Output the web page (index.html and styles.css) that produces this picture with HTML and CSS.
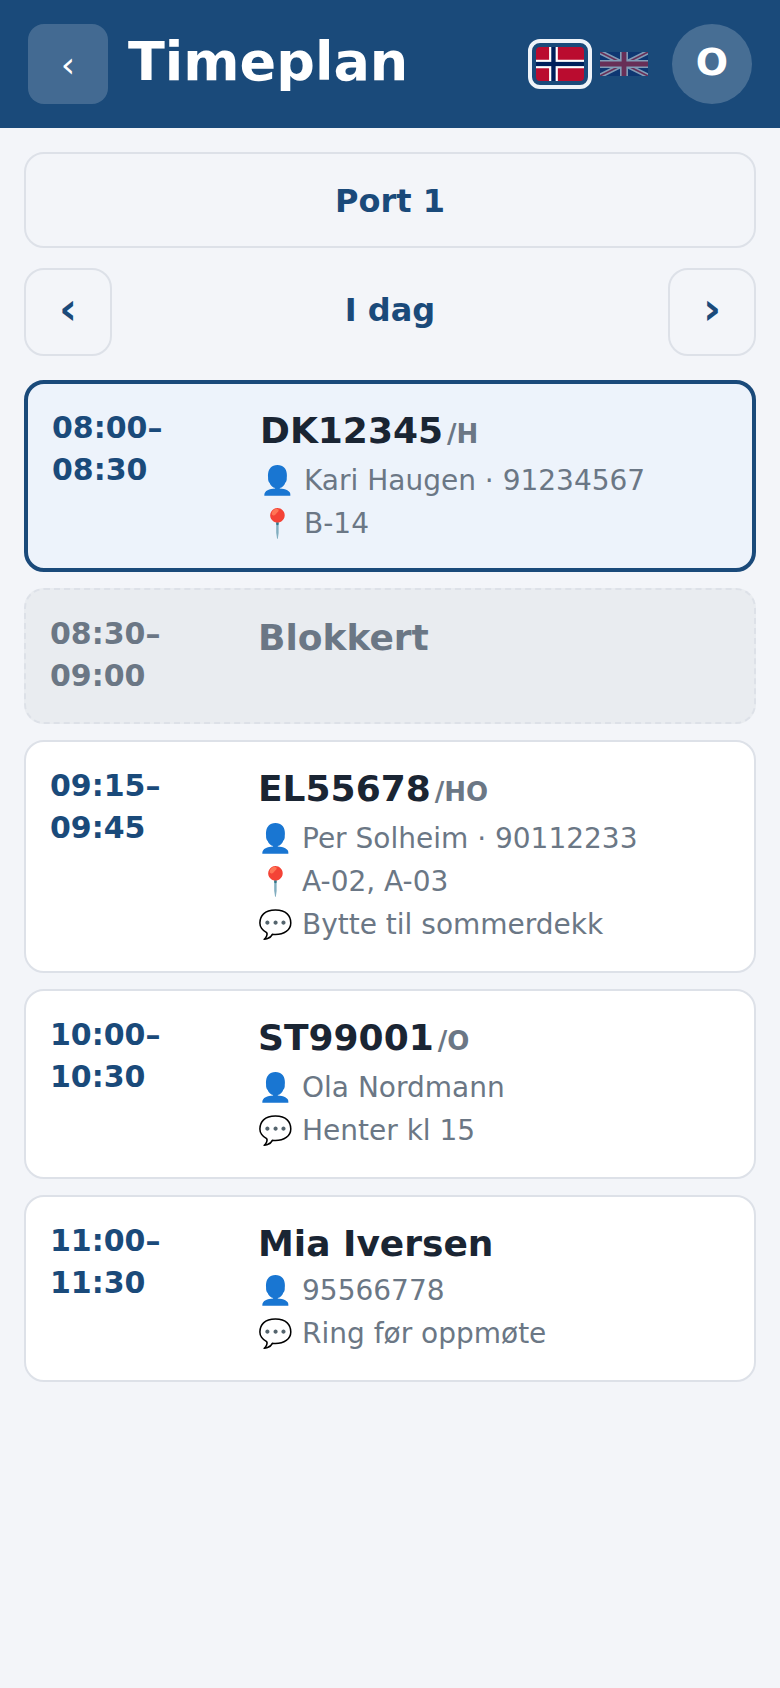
FILE: index.html
```html
<!DOCTYPE html>
<html lang="no">
  <head>
    <meta charset="UTF-8" />
    <meta name="viewport" content="width=device-width, initial-scale=1.0" />
    <title>Timeplan</title>
    <link rel="stylesheet" href="styles.css">
  </head>

  <body>
    <header class="topbar">
      <button class="back-btn">‹</button>
      <h1 class="title">Timeplan</h1>
      <div class="langs">
        <button class="lang lang-active">
          <svg class="flag" viewBox="0 0 22 16" preserveAspectRatio="none">
            <rect width="22" height="16" fill="#ba0c2f" />
            <rect x="6" width="4" height="16" fill="#fff" />
            <rect y="6" width="22" height="4" fill="#fff" />
            <rect x="7" width="2" height="16" fill="#00205b" />
            <rect y="7" width="22" height="2" fill="#00205b" />
          </svg>
        </button>
        <button class="lang lang-off">
          <svg class="flag" viewBox="0 0 60 30" preserveAspectRatio="none">
            <rect width="60" height="30" fill="#012169" />
            <path d="M0 0L60 30M60 0L0 30" stroke="#fff" stroke-width="6" />
            <path d="M0 0L60 30M60 0L0 30" stroke="#c8102e" stroke-width="2" />
            <path d="M30 0V30M0 15H60" stroke="#fff" stroke-width="10" />
            <path d="M30 0V30M0 15H60" stroke="#c8102e" stroke-width="6" />
          </svg>
        </button>
      </div>
      <div class="avatar">O</div>
    </header>

    <main class="content">
      <div class="port">Port 1</div>

      <div class="day-nav">
        <button class="nav-btn">‹</button>
        <div class="day">I dag</div>
        <button class="nav-btn">›</button>
      </div>

      <div class="slots">
        <div class="slot slot-selected">
          <div class="time">08:00–<br />08:30</div>
          <div class="info">
            <div class="name">DK12345<span class="code">/H</span></div>
            <div class="line"><span class="ico">👤</span>Kari Haugen · 91234567</div>
            <div class="line"><span class="ico">📍</span>B-14</div>
          </div>
        </div>

        <div class="slot slot-blocked">
          <div class="time">08:30–<br />09:00</div>
          <div class="info">
            <div class="name">Blokkert</div>
          </div>
        </div>

        <div class="slot">
          <div class="time">09:15–<br />09:45</div>
          <div class="info">
            <div class="name">EL55678<span class="code">/HO</span></div>
            <div class="line"><span class="ico">👤</span>Per Solheim · 90112233</div>
            <div class="line"><span class="ico">📍</span>A-02, A-03</div>
            <div class="line"><span class="ico">💬</span>Bytte til sommerdekk</div>
          </div>
        </div>

        <div class="slot">
          <div class="time">10:00–<br />10:30</div>
          <div class="info">
            <div class="name">ST99001<span class="code">/O</span></div>
            <div class="line"><span class="ico">👤</span>Ola Nordmann</div>
            <div class="line"><span class="ico">💬</span>Henter kl 15</div>
          </div>
        </div>

        <div class="slot">
          <div class="time">11:00–<br />11:30</div>
          <div class="info">
            <div class="name">Mia Iversen</div>
            <div class="line"><span class="ico">👤</span>95566778</div>
            <div class="line"><span class="ico">💬</span>Ring før oppmøte</div>
          </div>
        </div>
      </div>
    </main>
  </body>
</html>
```

FILE: styles.css
```css
body {
  margin: 0;
  background-color: #f3f5f9;
  font-family: "DejaVu Sans", sans-serif;
  color: #1a2533;
}

button {
  font-family: inherit;
  padding: 0;
}

.topbar {
  display: flex;
  align-items: center;
  height: 128px;
  padding: 0 28px;
  box-sizing: border-box;
  background-color: #1a4a7a;
  color: white;
}

.back-btn {
  width: 80px;
  height: 80px;
  border: none;
  border-radius: 16px;
  background-color: rgba(255, 255, 255, 0.18);
  color: white;
  font-size: 36px;
}

.title {
  flex: 1;
  margin: 0 0 6px 20px;
  font-size: 54px;
  font-weight: bold;
}

.langs {
  display: flex;
  align-items: center;
  gap: 8px;
  margin-right: 24px;
}

.lang {
  display: flex;
  align-items: center;
  justify-content: center;
  border: none;
  background: none;
}

.lang-active {
  width: 64px;
  height: 50px;
  box-sizing: border-box;
  border: 4px solid #eef3f9;
  border-radius: 12px;
}

.lang-active .flag {
  width: 48px;
  height: 34px;
  border-radius: 4px;
}

.lang-off {
  width: 48px;
  height: 24px;
  opacity: 0.45;
}

.lang-off .flag {
  width: 48px;
  height: 24px;
}

.flag {
  display: block;
}

.avatar {
  display: flex;
  align-items: center;
  justify-content: center;
  width: 80px;
  height: 80px;
  padding-bottom: 4px;
  box-sizing: border-box;
  border-radius: 50%;
  background-color: rgba(255, 255, 255, 0.2);
  font-size: 38px;
  font-weight: bold;
}

.content {
  display: flex;
  flex-direction: column;
  padding: 24px;
}

.port {
  display: flex;
  align-items: center;
  justify-content: center;
  height: 96px;
  padding-top: 2px;
  box-sizing: border-box;
  border: 2px solid #dde1e8;
  border-radius: 20px;
  color: #1a4a7a;
  font-size: 32px;
  font-weight: bold;
}

.day-nav {
  display: flex;
  align-items: center;
  margin-top: 20px;
}

.nav-btn {
  width: 88px;
  height: 88px;
  padding-bottom: 8px;
  border: 2px solid #dde1e8;
  border-radius: 20px;
  background: none;
  color: #1a4a7a;
  font-size: 44px;
  font-weight: bold;
}

.day {
  flex: 1;
  padding-bottom: 4px;
  text-align: center;
  color: #1a4a7a;
  font-size: 32px;
  font-weight: bold;
}

.slots {
  display: flex;
  flex-direction: column;
  gap: 16px;
  margin-top: 24px;
}

.slot {
  display: flex;
  gap: 24px;
  padding: 23px 24px 25px;
  border: 2px solid #dde1e8;
  border-radius: 20px;
  background-color: white;
}

.slot-selected {
  padding-bottom: 23px;
  border: 4px solid #1a4a7a;
  background-color: #edf3fb;
}

.slot-blocked {
  border: 2px dashed #dde1e8;
  background-color: #e9ecf0;
}

.time {
  flex: none;
  width: 184px;
  color: #1a4a7a;
  font-size: 30px;
  font-weight: bold;
  line-height: 42px;
}

.slot-blocked .time,
.slot-blocked .name {
  color: #6b7785;
}

.slot-blocked .name {
  margin-top: 1px;
}

.info {
  padding: 1px 0 0.5px;
}

.name {
  margin-bottom: 1.5px;
  font-size: 36px;
  font-weight: bold;
  line-height: 46px;
}

.code {
  margin-left: 4px;
  color: #6b7785;
  font-size: 26px;
}

.line {
  color: #6b7785;
  font-size: 28px;
  line-height: 43px;
}

.ico {
  margin-right: 9px;
}
```
